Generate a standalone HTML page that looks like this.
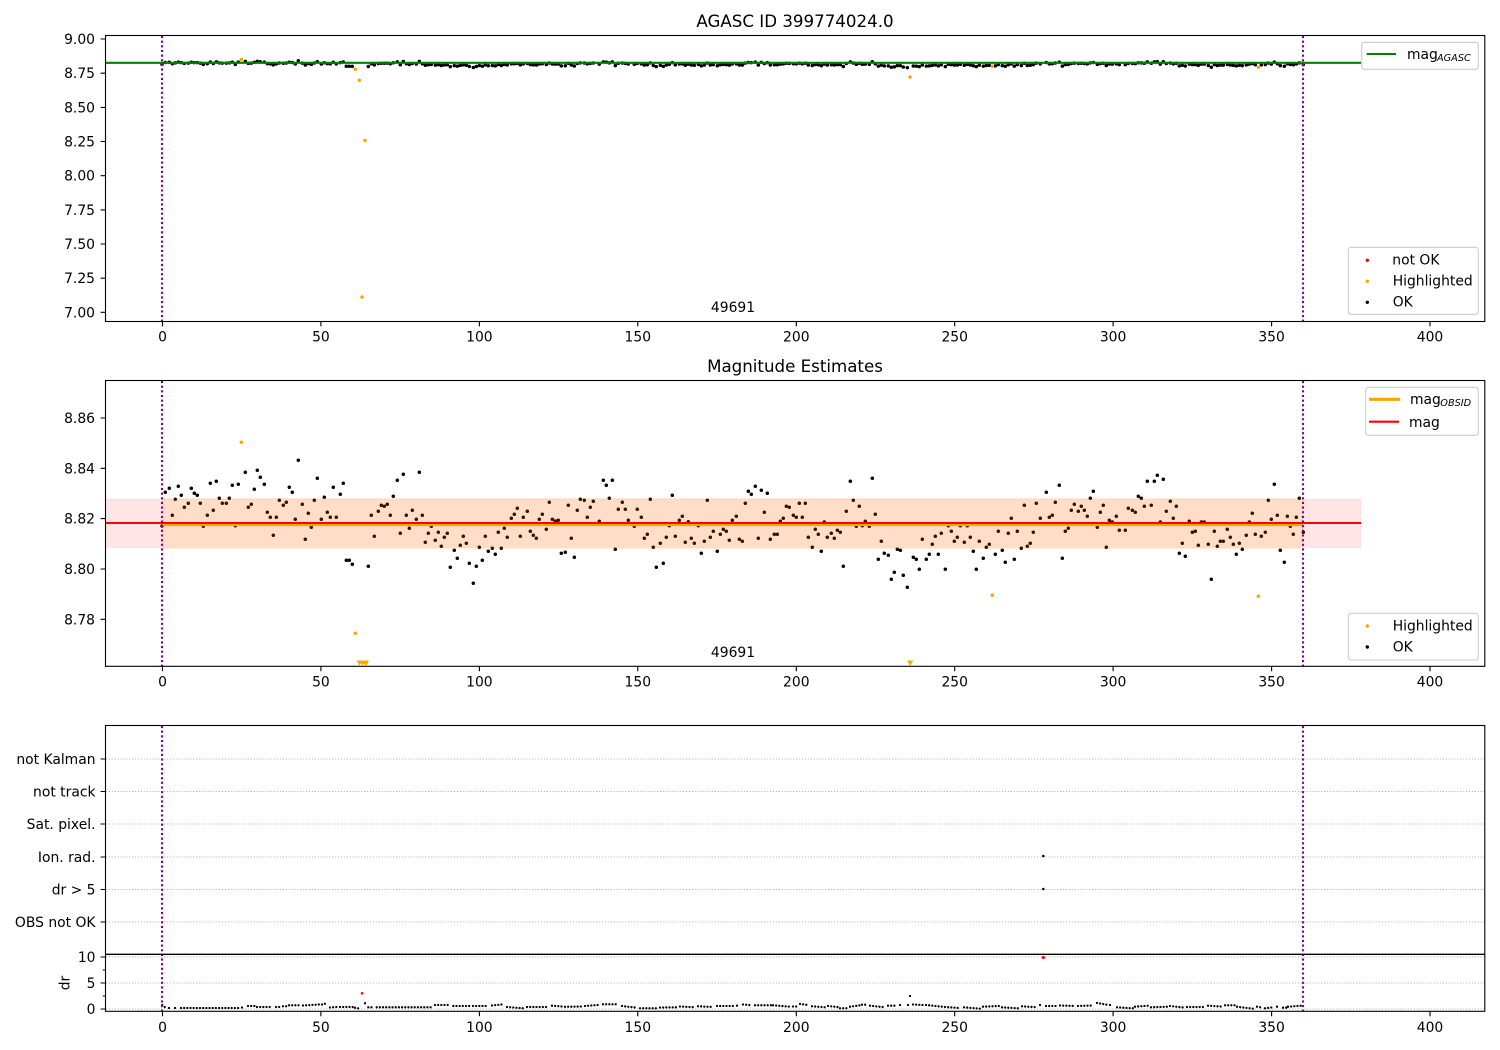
<!DOCTYPE html>
<html><head><meta charset="utf-8"><title>AGASC ID 399774024.0</title>
<style>
html,body{margin:0;padding:0;background:#fff}
svg{display:block;font-family:"DejaVu Sans","Liberation Sans",sans-serif;font-size:13.89px;fill:#000}
.s{fill:none;stroke:#000;stroke-width:1.1}
.t{stroke:#000;stroke-width:1.1;fill:none}
.g{stroke:#b0b0b0;stroke-width:1.1;stroke-dasharray:1.1 1.8;fill:none}
.d{fill:none;stroke-linecap:round;stroke-width:3.5;vector-effect:non-scaling-stroke}
.v{stroke:#800080;stroke-width:2.1;stroke-dasharray:2.1 2.55;fill:none}
.l{fill:#fff;fill-opacity:.8;stroke:#ccc;stroke-width:1.1}
.b{fill:none;stroke:#000;stroke-width:2.3;stroke-linecap:round;stroke-dasharray:0 3.17}
.e{text-anchor:end}.m{text-anchor:middle}
</style></head><body>
<svg width="1500" height="1050" viewBox="0 0 1500 1050" xmlns="http://www.w3.org/2000/svg">
<defs>
<path id="p" class="d" stroke="#000" d="M162 526h0M165.3 492.3h0M169.3 488.3h0M172.3 515.3h0M175.3 499.3h0M178.3 486.3h0M181.3 495.3h0M184.3 507.3h0M188.3 503.3h0M191.3 488.3h0M194.3 493.3h0M197.3 495.3h0M200.3 503.3h0M203.3 526.3h0M207.3 515.3h0M210.3 483.3h0M213.3 510.3h0M216.3 481.3h0M219.3 498.3h0M222.3 503.3h0M226.3 503.3h0M229.3 498.3h0M232.3 485.3h0M235.3 525.7h0M238.3 484.3h0M245.3 472.3h0M248.3 507.3h0M251.3 504.3h0M254.3 489.3h0M257.3 470.3h0M260.3 477.3h0M264.3 484.3h0M267.3 512.3h0M270.3 517.3h0M273.3 535.3h0M276.3 517.3h0M279.3 500.3h0M283.3 505.3h0M286.3 502.3h0M289.3 487.3h0M292.3 492.3h0M295.3 519.3h0M298.3 460.3h0M302.3 504.3h0M305.3 539.3h0M308.3 513.3h0M311.3 527.3h0M314.3 500.3h0M317.3 478.3h0M321.3 519.3h0M324.3 497.3h0M327.3 512.3h0M330.3 517.3h0M333.3 487.3h0M336.3 517.3h0M340.3 494.3h0M343.3 483.3h0M346.3 560.3h0M349.3 560.3h0M352.3 564.3h0M368.3 566.3h0M371.3 515.3h0M374.3 536.3h0M378.3 511.3h0M381.3 505.3h0M384.3 506.3h0M387.3 504.3h0M390.3 515.3h0M393.3 496.3h0M397.3 480.3h0M400.3 533.3h0M403.3 474.3h0M406.3 515.3h0M409.3 528.3h0M412.3 510.3h0M416.3 519.3h0M419.3 472.3h0M422.3 515.3h0M425.3 542.3h0M428.3 533.3h0M431.3 526.3h0M435.3 540.3h0M438.3 532.3h0M441.3 546.3h0M444.3 537.3h0M447.3 533.3h0M450.3 567.3h0M454.3 550.3h0M457.3 558.3h0M460.3 545.3h0M463.3 536.3h0M466.3 543.3h0M469.3 563.3h0M473.3 583.3h0M476.3 566.3h0M479.3 547.3h0M482.3 560.3h0M485.3 536.3h0M488.3 551.3h0M492.3 548.3h0M495.3 554.3h0M498.3 532.3h0M501.3 548.3h0M504.3 528.3h0M507.3 537.3h0M511.3 518.3h0M514.3 514.3h0M517.3 508.3h0M520.3 536.3h0M523.3 517.3h0M527.3 511.3h0M530.3 531.3h0M533.3 535.3h0M536.3 538.3h0M539.3 519.3h0M542.3 514.3h0M546.3 529.3h0M549.3 502.3h0M552.3 519.3h0M555.3 521h0M558.3 520.3h0M561.3 553.3h0M565.3 552.3h0M568.3 505.3h0M571.3 538.3h0M574.3 557.3h0M577.3 510.3h0M580.3 499.3h0M584.3 500.3h0M587.3 517.3h0M590.3 507.3h0M593.3 501.3h0M599.3 521.3h0M603.3 480.3h0M606.3 485.3h0M609.3 498.3h0M612.3 480.3h0M615.3 549.3h0M618.3 509.3h0M622.3 502.3h0M625.3 509.3h0M628.3 520.3h0M634.3 526.3h0M637.3 509.3h0M641.3 517.3h0M644.3 538.3h0M647.3 534.3h0M650.3 499.3h0M653.3 547.3h0M656.3 567.3h0M660.3 543.3h0M663.3 563.3h0M666.3 537.3h0M669.3 525.7h0M672.3 495.3h0M675.3 536.3h0M679.3 520.3h0M682.3 516.3h0M685.3 542.3h0M688.3 521.7h0M691.3 538.3h0M694.3 543.3h0M698.3 525.7h0M701.3 553.3h0M704.3 541.3h0M707.3 500.3h0M710.3 537.3h0M713.3 531.3h0M717.3 551.3h0M720.3 534.3h0M723.3 529.3h0M726.3 531.3h0M729.3 540.3h0M732.3 520.3h0M736.3 516.3h0M739.3 539.3h0M742.3 541.3h0M745.3 503.3h0M748.3 491.3h0M751.3 494.3h0M755.3 486.3h0M758.3 538.3h0M761.3 490.3h0M764.3 512.3h0M767.3 493.3h0M770.3 539.3h0M774.3 534.3h0M777.3 534.3h0M780.3 521.3h0M783.3 518.3h0M786.3 506.3h0M789.3 507.3h0M793.3 515.3h0M796.3 517.3h0M799.3 503.3h0M802.3 517.3h0M805.3 503.3h0M808.3 537.3h0M812.3 547.3h0M815.3 529.3h0M818.3 534.3h0M821.3 551.3h0M824.3 522h0M827.3 537.3h0M831.3 533.3h0M834.3 538.3h0M837.3 530.3h0M840.3 532.3h0M843.3 566.3h0M846.3 511.3h0M850.3 481.3h0M853.3 500.3h0M856.3 526.3h0M859.3 506.3h0M862.3 525.7h0M865.3 521.3h0M869.3 526.3h0M872.3 478.3h0M875.3 514.3h0M878.3 559.3h0M881.3 541.3h0M884.3 553.3h0M888.3 555.3h0M891.3 579.3h0M894.3 572.3h0M897.3 549.3h0M900.3 550.3h0M903.3 575.3h0M907.3 587.3h0M913.3 557.3h0M916.3 559.3h0M919.3 569.3h0M922.3 539.3h0M926.3 559.3h0M929.3 554.3h0M932.3 544.3h0M935.3 536.3h0M938.3 554.3h0M941.3 533.3h0M945.3 569.3h0M948.3 525.7h0M951.3 531.3h0M954.3 541.3h0M957.3 537.3h0M960.3 525.7h0M964.3 542.3h0M967.3 525.7h0M970.3 537.3h0M973.3 551.3h0M976.3 569.3h0M979.3 541.3h0M983.3 558.3h0M986.3 547.3h0M989.3 544.3h0M995.3 554.3h0M998.3 531.3h0M1002.3 550.3h0M1005.3 562.3h0M1008.3 533.3h0M1011.3 518.3h0M1014.3 559.3h0M1017.3 531.3h0M1021.3 548.3h0M1024.3 505.3h0M1027.3 546.3h0M1030.3 543.3h0M1033.3 532.3h0M1036.3 503.3h0M1040.3 518.3h0M1046.3 492.3h0M1049.3 517.3h0M1052.3 515.3h0M1055.3 502.3h0M1059.3 485.3h0M1062.3 558.3h0M1065.3 531.3h0M1068.3 528.3h0M1071.3 510.3h0M1074.3 504.3h0M1078.3 511.3h0M1081.3 506.3h0M1084.3 510.3h0M1087.3 516.3h0M1090.3 498.3h0M1093.3 491.3h0M1097.3 527.3h0M1100.3 512.3h0M1103.3 505.3h0M1106.3 547.3h0M1109.3 520.3h0M1112.3 522h0M1116.3 516.3h0M1119.3 530.3h0M1125.3 530.3h0M1128.3 508.3h0M1132.3 510.3h0M1135.3 512.3h0M1138.3 496.3h0M1141.3 498.3h0M1144.3 506.3h0M1147.3 481.3h0M1151.3 505.3h0M1154.3 481.3h0M1157.3 475.3h0M1160.3 522h0M1163.3 479.3h0M1166.3 511.3h0M1170.3 501.3h0M1173.3 518.3h0M1176.3 506.3h0M1179.3 553.3h0M1182.3 543.3h0M1185.3 556.3h0M1189.3 521.3h0M1192.3 532.3h0M1195.3 531.3h0M1198.3 545.3h0M1201.3 522h0M1204.3 522h0M1208.3 544.3h0M1211.3 579.3h0M1214.3 531.3h0M1217.3 546.3h0M1220.3 541.3h0M1223.3 541.3h0M1227.3 529.3h0M1230.3 537.3h0M1233.3 544.3h0M1236.3 554.3h0M1239.3 543.3h0M1242.3 549.3h0M1246.3 535.3h0M1249.3 522h0M1252.3 513.3h0M1255.3 534.3h0M1261.3 536.3h0M1265.3 532.3h0M1268.3 500.3h0M1271.3 519.3h0M1274.3 484.3h0M1277.3 515.3h0M1280.3 550.3h0M1284.3 562.3h0M1287.3 516.3h0M1290.3 526.3h0M1293.3 534.3h0M1296.3 517.3h0M1299.3 498.3h0M1303.3 532.3h0"/>
</defs>

<!-- Panel 1 -->
<use href="#p" transform="matrix(1 0 0 .0542 0 35.83)"/>
<path d="M241.3 59.5h0M355.3 69.3h0M359.3 80.3h0M365 140.5h0M362 297h0M910 77h0M992.3 66.3h0M1258.3 67.3h0" fill="none" stroke="#ffa500" stroke-width="3.5" stroke-linecap="round"/>
<path d="M105.5 62.8H1361" stroke="#008000" stroke-width="2.1" fill="none"/>
<path class="v" d="M162 36V321M1303 36V321"/>
<rect class="s" x="105.5" y="35.5" width="1379.3" height="286"/>
<path class="t" d="M100.6 39h4.9M100.6 73.2h4.9M100.6 107.4h4.9M100.6 141.5h4.9M100.6 175.7h4.9M100.6 209.9h4.9M100.6 244h4.9M100.6 278.2h4.9M100.6 312.3h4.9M162.5 321.5v4.9M320.9 321.5v4.9M479.4 321.5v4.9M637.8 321.5v4.9M796.3 321.5v4.9M954.7 321.5v4.9M1113.1 321.5v4.9M1271.6 321.5v4.9M1430 321.5v4.9"/>
<g class="e"><text x="95" y="44">9.00</text><text x="95" y="78.2">8.75</text><text x="95" y="112.4">8.50</text><text x="95" y="146.5">8.25</text><text x="95" y="180.7">8.00</text><text x="95" y="214.9">7.75</text><text x="95" y="249">7.50</text><text x="95" y="283.2">7.25</text><text x="95" y="317.3">7.00</text></g>
<g class="m"><text x="162.5" y="341.5">0</text><text x="320.9" y="341.5">50</text><text x="479.4" y="341.5">100</text><text x="637.8" y="341.5">150</text><text x="796.3" y="341.5">200</text><text x="954.7" y="341.5">250</text><text x="1113.1" y="341.5">300</text><text x="1271.6" y="341.5">350</text><text x="1430" y="341.5">400</text></g>
<text class="m" x="795" y="27" style="font-size:16.67px">AGASC ID 399774024.0</text>
<text class="m" x="733" y="312">49691</text>
<rect class="l" x="1361.7" y="42.3" width="116.6" height="27" rx="2.8"/>
<path d="M1366.7 54H1396" stroke="#008000" stroke-width="2.1" fill="none"/>
<text x="1407" y="59">mag</text><text x="1437" y="61" style="font-size:9.72px;font-style:italic">AGASC</text>
<rect class="l" x="1348.3" y="247.3" width="130" height="67" rx="2.8"/>
<circle cx="1367.3" cy="260.3" r="1.7" fill="#f00"/><circle cx="1367.3" cy="281.3" r="1.7" fill="#ffa500"/><circle cx="1367.3" cy="302.3" r="1.7" fill="#000"/>
<text x="1392.3" y="264.5">not OK</text><text x="1392.7" y="285.5">Highlighted</text><text x="1392.7" y="306.5">OK</text>

<!-- Panel 2 -->
<use href="#p"/>
<path d="M241.3 442.3h0M355.3 633.3h0M992.3 595.3h0M1258.3 596.3h0" fill="none" stroke="#ffa500" stroke-width="3.5" stroke-linecap="round"/>
<path d="M356.5 660.5h6l-3 5zM359.5 660.5h6l-3 5zM362 660.5h6l-3 5zM364 660.5h5l-2.5 5zM907 660.5h6.4l-3.2 5.2z" fill="#ffa500"/>
<rect x="105.5" y="499" width="1255.5" height="48.5" fill="#f00" fill-opacity=".1" stroke="#f00" stroke-opacity=".06"/>
<rect x="162" y="498.5" width="1141" height="50.5" fill="#ffa500" fill-opacity=".12" stroke="#ffa500" stroke-opacity=".08"/>
<path d="M162 524.4H1303" stroke="#ffa500" stroke-width="3.4" fill="none"/>
<path d="M105.5 523H1361" stroke="#f00" stroke-width="2.1" fill="none"/>
<path class="v" d="M162 381V666M1303 381V666"/>
<rect class="s" x="105.5" y="380.5" width="1379.3" height="285.8"/>
<path class="t" d="M100.6 418h4.9M100.6 468.3h4.9M100.6 518.6h4.9M100.6 569h4.9M100.6 619.3h4.9M162.5 666.3v4.9M320.9 666.3v4.9M479.4 666.3v4.9M637.8 666.3v4.9M796.3 666.3v4.9M954.7 666.3v4.9M1113.1 666.3v4.9M1271.6 666.3v4.9M1430 666.3v4.9"/>
<g class="e"><text x="95" y="423">8.86</text><text x="95" y="473.3">8.84</text><text x="95" y="523.6">8.82</text><text x="95" y="574">8.80</text><text x="95" y="624.3">8.78</text></g>
<g class="m"><text x="162.5" y="686.3">0</text><text x="320.9" y="686.3">50</text><text x="479.4" y="686.3">100</text><text x="637.8" y="686.3">150</text><text x="796.3" y="686.3">200</text><text x="954.7" y="686.3">250</text><text x="1113.1" y="686.3">300</text><text x="1271.6" y="686.3">350</text><text x="1430" y="686.3">400</text></g>
<text class="m" x="795" y="372" style="font-size:16.67px">Magnitude Estimates</text>
<text class="m" x="733" y="657">49691</text>
<rect class="l" x="1365.7" y="387.3" width="112.6" height="48" rx="2.8"/>
<path d="M1369 399.3H1400" stroke="#ffa500" stroke-width="3.2" fill="none"/>
<path d="M1369 421.7H1399" stroke="#f00" stroke-width="2.1" fill="none"/>
<text x="1410" y="404">mag</text><text x="1440.3" y="406" style="font-size:9.72px;font-style:italic">OBSID</text>
<text x="1409" y="427">mag</text>
<rect class="l" x="1348.3" y="613.3" width="130" height="46.7" rx="2.8"/>
<circle cx="1367.3" cy="626" r="1.7" fill="#ffa500"/><circle cx="1367.3" cy="647" r="1.7" fill="#000"/>
<text x="1392.7" y="630.3">Highlighted</text><text x="1392.7" y="651.3">OK</text>

<!-- Panel 3 -->
<path class="g" d="M106 759H1484M106 791.5H1484M106 824H1484M106 857H1484M106 889.5H1484M106 922H1484M106 957H1484M106 983H1484M106 1009H1484"/>
<circle cx="1043.3" cy="856" r="1.3"/><circle cx="1043.3" cy="889" r="1.3"/>
<path class="b" d="M162.3 1005L165 1007.3M169 1008L172 1007M175 1008L178 1007M181 1008L240 1008M242 1007.5L245 1007M248 1006L255 1006M257 1007L272 1007M276 1007L280 1007M283 1006.3L287 1006.3M289 1005.3L300 1005.3M303 1005.5L319 1004.5M322 1004.5L324 1003.5L327 1004.5M330 1007.5L337 1007M340 1007L353 1007M355 1007.8L359 1008.5"/>
<path class="b" d="M365 1003.3L365.1 1003.3M368.3 1007.3L373 1007.3M376.7 1007.3L431.7 1007.3M435 1005L450.7 1005M453.3 1006L470 1006M473 1006L488 1006M492 1005.5L502 1004.5M507 1007L523 1008.3M527 1007L548 1007M552 1005.7L562 1006.5M565 1006.8L582 1006.5M585 1006L598 1005M603 1004.3L617 1004.3M622 1006L637 1007.7M640 1008.3L657 1008.3M660 1007.5L677 1007.3M680 1006.5L695 1007.3M698 1006.3L713 1007M717 1006L733 1006M737 1005.7L740 1005.7M743 1004.5L752 1005.3M755 1005.3L772 1005.3M773 1005.3L790 1006.7M793 1006.5L797 1006.5M800 1004L808 1005M812 1006.3L825 1007.3M828 1006L840 1007.3"/>
<path class="b" d="M840 1008.3L848 1008.3M850 1006.7L860 1005.3M862 1004.7L867 1004.7M870 1005.7L885 1007.3M888 1005.7L897 1005.7M900 1005L903 1006M908 1005L908.1 1005M910 996L910.1 996M913 1004.5L923 1005M926 1005L942 1006.7M945 1007L960 1008M964 1007.3L980 1008.7M983 1006.7L1000 1006M1002 1007.3L1018 1008.3M1022 1006.3L1037 1007.3M1040 1005L1040.1 1005M1046 1006L1057 1006M1060 1005.5L1075 1006M1078 1006L1093 1005.5M1097 1003L1107 1004.7M1110 1005L1113 1005M1117 1007.3L1133 1008.3M1135 1006.7L1148 1005.7M1151 1007.3L1168 1006.7M1170 1006L1185 1007.7M1187 1007L1205 1007M1208 1005.7L1223 1006.7M1225 1005.3L1235 1005.3M1237 1006.7L1253 1008.7M1257 1006.7L1263 1007.7M1265 1008.3L1273 1007.3M1277 1006.7L1280 1006.7M1283 1007.7L1287 1007.7M1288 1006.7L1302 1005.7"/>
<circle cx="362" cy="993.3" r="1.3" fill="#f00"/><circle cx="1043.3" cy="957.5" r="1.6" fill="#f00"/>
<path class="v" d="M162 726V1011M1303 726V1011"/>
<rect class="s" x="105.5" y="725.5" width="1379.3" height="285.8"/>
<path d="M105.5 954.3H1484.8" stroke="#000" stroke-width="1.3" fill="none"/>
<path class="t" d="M100.6 759h4.9M100.6 791.5h4.9M100.6 824h4.9M100.6 857h4.9M100.6 889.5h4.9M100.6 922h4.9M100.6 957h4.9M100.6 983h4.9M100.6 1009h4.9M102.7 970h2.8M102.7 996h2.8M162.5 1011.3v4.9M320.9 1011.3v4.9M479.4 1011.3v4.9M637.8 1011.3v4.9M796.3 1011.3v4.9M954.7 1011.3v4.9M1113.1 1011.3v4.9M1271.6 1011.3v4.9M1430 1011.3v4.9"/>
<g class="e"><text x="95.5" y="764">not Kalman</text><text x="95.5" y="796.5">not track</text><text x="95.5" y="829">Sat. pixel.</text><text x="95.5" y="862">Ion. rad.</text><text x="95.5" y="894.5">dr &gt; 5</text><text x="95.5" y="927">OBS not OK</text><text x="95.5" y="962">10</text><text x="95.5" y="988">5</text><text x="95.5" y="1014">0</text></g>
<text class="m" transform="translate(69.5,983) rotate(-90)">dr</text>
<g class="m"><text x="162.5" y="1032">0</text><text x="320.9" y="1032">50</text><text x="479.4" y="1032">100</text><text x="637.8" y="1032">150</text><text x="796.3" y="1032">200</text><text x="954.7" y="1032">250</text><text x="1113.1" y="1032">300</text><text x="1271.6" y="1032">350</text><text x="1430" y="1032">400</text></g>
</svg>
</body></html>
